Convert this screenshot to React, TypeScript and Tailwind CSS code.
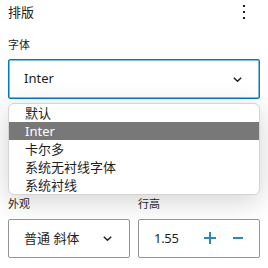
import React from 'react';

const fontStack = { fontFamily: '"Noto Sans", "Noto Sans CJK SC", sans-serif' };

const Chevron: React.FC = () => (
  <svg width="9" height="5" viewBox="0 0 9 5" fill="none">
    <path d="M0.8 0.8 L4.5 4.2 L8.2 0.8" stroke="#1e1e1e" strokeWidth="1.5" />
  </svg>
);

const fonts = ['默认', 'Inter', '卡尔多', '系统无衬线字体', '系统衬线'];

export default function App() {
  return (
    <div className="w-[268px] h-[268px] overflow-hidden bg-white px-2 text-[#1e1e1e]" style={fontStack}>
      {/* header */}
      <div className="flex h-[24px] items-center justify-between">
        <span className="text-[13px] leading-[24px]">排版</span>
        <div className="mr-[15px] flex flex-col gap-[4px]">
          <span className="block h-[2px] w-[2px] bg-[#1e1e1e]" />
          <span className="block h-[2px] w-[2px] bg-[#1e1e1e]" />
          <span className="block h-[2px] w-[2px] bg-[#1e1e1e]" />
        </div>
      </div>

      {/* font family */}
      <div className="mt-[13px] text-[11px] leading-[16px]">字体</div>
      <div className="mt-[6px] flex h-[40px] items-center justify-between rounded-[2px] border border-[#007cba] pl-[15px] pr-[17px] shadow-[inset_0_0_0_0.5px_#007cba]">
        <span className="text-[13px]">Inter</span>
        <Chevron />
      </div>

      {/* open list */}
      <ul className="mt-[4px] overflow-hidden rounded-[6px] border border-[#d4d4d4] bg-white shadow-[0_6px_28px_rgba(0,0,0,0.18)]">
        {fonts.map((f) => (
          <li
            key={f}
            className={`pl-[16px] text-[13px] leading-[18px] ${
              f === 'Inter' ? 'bg-[#787878] text-white' : 'text-[#1e1e1e]'
            }`}
          >
            {f}
          </li>
        ))}
      </ul>

      {/* appearance + line height */}
      <div className="mt-[1px] grid grid-cols-2 gap-2">
        <div>
          <div className="text-[11px] leading-[16px]">外观</div>
          <div className="mt-[7px] flex h-[39px] items-center justify-between rounded-[2px] border border-[#949494] bg-white pl-[15px] pr-[17px]">
            <span className="text-[13px]">普通 斜体</span>
            <Chevron />
          </div>
        </div>
        <div>
          <div className="text-[11px] leading-[16px]">行高</div>
          <div className="mt-[7px] flex h-[39px] items-center rounded-[2px] border border-[#949494] bg-white pl-[15px]">
            <span className="w-[24px] text-[13px] tracking-[-0.3px]">1.55</span>
            <svg className="ml-[26px] -mt-[1px]" width="12" height="12" viewBox="0 0 12 12">
              <path d="M6 0 V12 M0 6 H12" stroke="#2a8ac0" strokeWidth="2" />
            </svg>
            <svg className="ml-[17px] -mt-[1px]" width="10" height="12" viewBox="0 0 10 12">
              <path d="M0 6 H10" stroke="#2a8ac0" strokeWidth="2" />
            </svg>
          </div>
        </div>
      </div>
    </div>
  );
}
